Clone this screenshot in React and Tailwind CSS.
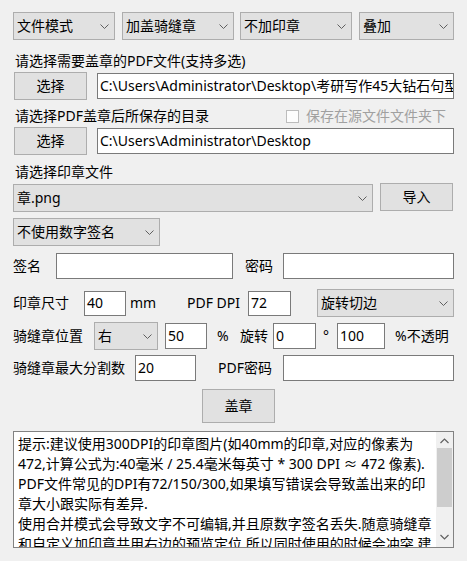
import { useState } from 'react';

const FONT = { fontFamily: '"Noto Sans", "Noto Sans CJK SC", sans-serif' };

const Chevron = () => (
  <svg width="9" height="5" viewBox="0 0 9 5" className="shrink-0">
    <path d="M0.5 0.5 L4.5 4.5 L8.5 0.5" stroke="#5f5f5f" strokeWidth="1" fill="none" />
  </svg>
);

const Select = ({ w, children }) => (
  <div className={`${w} h-[28px] shrink-0 flex items-center justify-between pl-[3px] pr-[5px] bg-[#e1e1e1] border border-[#adadad]`}>
    <span className="whitespace-nowrap overflow-hidden">{children}</span>
    <Chevron />
  </div>
);

const Button = ({ w, h, children }) => (
  <div className={`${w} ${h} shrink-0 flex items-center justify-center bg-[#e1e1e1] border border-[#adadad]`}>
    {children}
  </div>
);

const Input = ({ w, h = 'h-[26px]', children }) => (
  <div className={`${w} ${h} shrink-0 flex items-center pl-[2px] bg-white border border-[#7a7a7a] overflow-hidden whitespace-nowrap`}>
    {children}
  </div>
);

const tips = [
  '提示:建议使用300DPI的印章图片(如40mm的印章,对应的像素为',
  '472,计算公式为:40毫米 / 25.4毫米每英寸 * 300 DPI ≈ 472 像素).',
  'PDF文件常见的DPI有72/150/300,如果填写错误会导致盖出来的印',
  '章大小跟实际有差异.',
  '使用合并模式会导致文字不可编辑,并且原数字签名丢失.随意骑缝章',
  '和自定义加印章共用右边的预览定位,所以同时使用的时候会冲突,建',
];

export default function App() {
  const [keep] = useState(false);

  return (
    <div className="w-[467px] h-[561px] bg-[#f0f0f0] text-black text-[14px] leading-[20px] pl-[13px] pt-[12px] overflow-hidden" style={FONT}>
      {/* mode selects */}
      <div className="flex h-[27px]">
        <Select w="w-[102px]">文件模式</Select>
        <div className="ml-[7px]"><Select w="w-[112px]">加盖骑缝章</Select></div>
        <div className="ml-[6px]"><Select w="w-[112px]">不加印章</Select></div>
        <div className="ml-[7px]"><Select w="w-[95px]">叠加</Select></div>
      </div>

      <div className="mt-[12px] h-[20px] pl-[2px]">请选择需要盖章的PDF文件(支持多选)</div>
      <div className="mt-[1px] flex items-center h-[28px]">
        <div className="ml-[1px]"><Button w="w-[73px]" h="h-[28px]">选择</Button></div>
        <div className="ml-[10px]"><Input w="w-[357px]">C:\Users\Administrator\Desktop\考研写作45大钻石句型.pdf</Input></div>
      </div>

      <div className="mt-[6px] h-[20px] flex items-center pl-[2px]">
        <span className="w-[271px]">请选择PDF盖章后所保存的目录</span>
        <span className={`w-[13px] h-[13px] border border-[#bcbcbc] ${keep ? 'bg-white' : 'bg-[#fdfdfd]'}`} />
        <span className="ml-[7px] text-[#a0a0a0]">保存在源文件文件夹下</span>
      </div>
      <div className="mt-[1px] flex items-center h-[28px]">
        <div className="ml-[1px]"><Button w="w-[73px]" h="h-[28px]">选择</Button></div>
        <div className="ml-[10px]"><Input w="w-[357px]">C:\Users\Administrator\Desktop</Input></div>
      </div>

      <div className="mt-[7px] h-[20px] pl-[2px]">请选择印章文件</div>
      <div className="mt-[1px] flex items-start h-[29px]">
        <div className="mt-[1px]"><Select w="w-[360px]">章.png</Select></div>
        <div className="ml-[7px]"><Button w="w-[73px]" h="h-[28px]">导入</Button></div>
      </div>

      <div className="mt-[6px] flex h-[28px]">
        <Select w="w-[147px]">不使用数字签名</Select>
      </div>

      {/* signature */}
      <div className="mt-[7px] flex items-center h-[26px]">
        <span className="w-[43px]">签名</span>
        <Input w="w-[177px]" />
        <span className="ml-[12px] w-[38px]">密码</span>
        <Input w="w-[171px]" />
      </div>

      {/* size / dpi */}
      <div className="mt-[10px] flex items-center h-[28px]">
        <span className="w-[71px]">印章尺寸</span>
        <Input w="w-[42px]" h="h-[25px]">40</Input>
        <span className="ml-[4px] w-[57px]">mm</span>
        <span className="w-[61px]">PDF DPI</span>
        <Input w="w-[43px]" h="h-[25px]">72</Input>
        <div className="ml-[26px]"><Select w="w-[137px]">旋转切边</Select></div>
      </div>

      {/* seam position */}
      <div className="mt-[5px] flex items-center h-[28px]">
        <span className="w-[81px]">骑缝章位置</span>
        <Select w="w-[64px]">右</Select>
        <div className="ml-[7px]"><Input w="w-[42px]">50</Input></div>
        <span className="ml-[10px] w-[23px]">%</span>
        <span className="w-[33px]">旋转</span>
        <Input w="w-[43px]">0</Input>
        <span className="ml-[7px] w-[14px]">°</span>
        <Input w="w-[48px]">100</Input>
        <span className="ml-[10px]">%不透明</span>
      </div>

      {/* split */}
      <div className="mt-[5px] flex items-center h-[26px]">
        <span className="w-[122px]">骑缝章最大分割数</span>
        <Input w="w-[61px]">20</Input>
        <span className="ml-[22px] w-[65px]">PDF密码</span>
        <Input w="w-[171px]" />
      </div>

      <div className="mt-[8px] ml-[189px]">
        <Button w="w-[73px]" h="h-[34px]">盖章</Button>
      </div>

      {/* tips */}
      <div className="mt-[8px] w-[441px] h-[117px] bg-white border border-[#828282] flex">
        <div className="flex-1 overflow-hidden pl-[4px] pt-[2px]">
          {tips.map((t) => (
            <div key={t} className="whitespace-nowrap h-[20px]">{t}</div>
          ))}
        </div>
        <div className="w-[17px] bg-[#f0f0f0] flex flex-col items-center">
          <svg width="9" height="6" viewBox="0 0 9 6" className="mt-[6px]">
            <path d="M0.5 5 L4.5 1 L8.5 5" stroke="#606060" strokeWidth="1.2" fill="none" />
          </svg>
          <div className="mt-[4px] w-[15px] h-[59px] bg-[#cdcdcd]" />
          <div className="flex-1" />
          <svg width="9" height="6" viewBox="0 0 9 6" className="mb-[7px]">
            <path d="M0.5 1 L4.5 5 L8.5 1" stroke="#606060" strokeWidth="1.2" fill="none" />
          </svg>
        </div>
      </div>
    </div>
  );
}
